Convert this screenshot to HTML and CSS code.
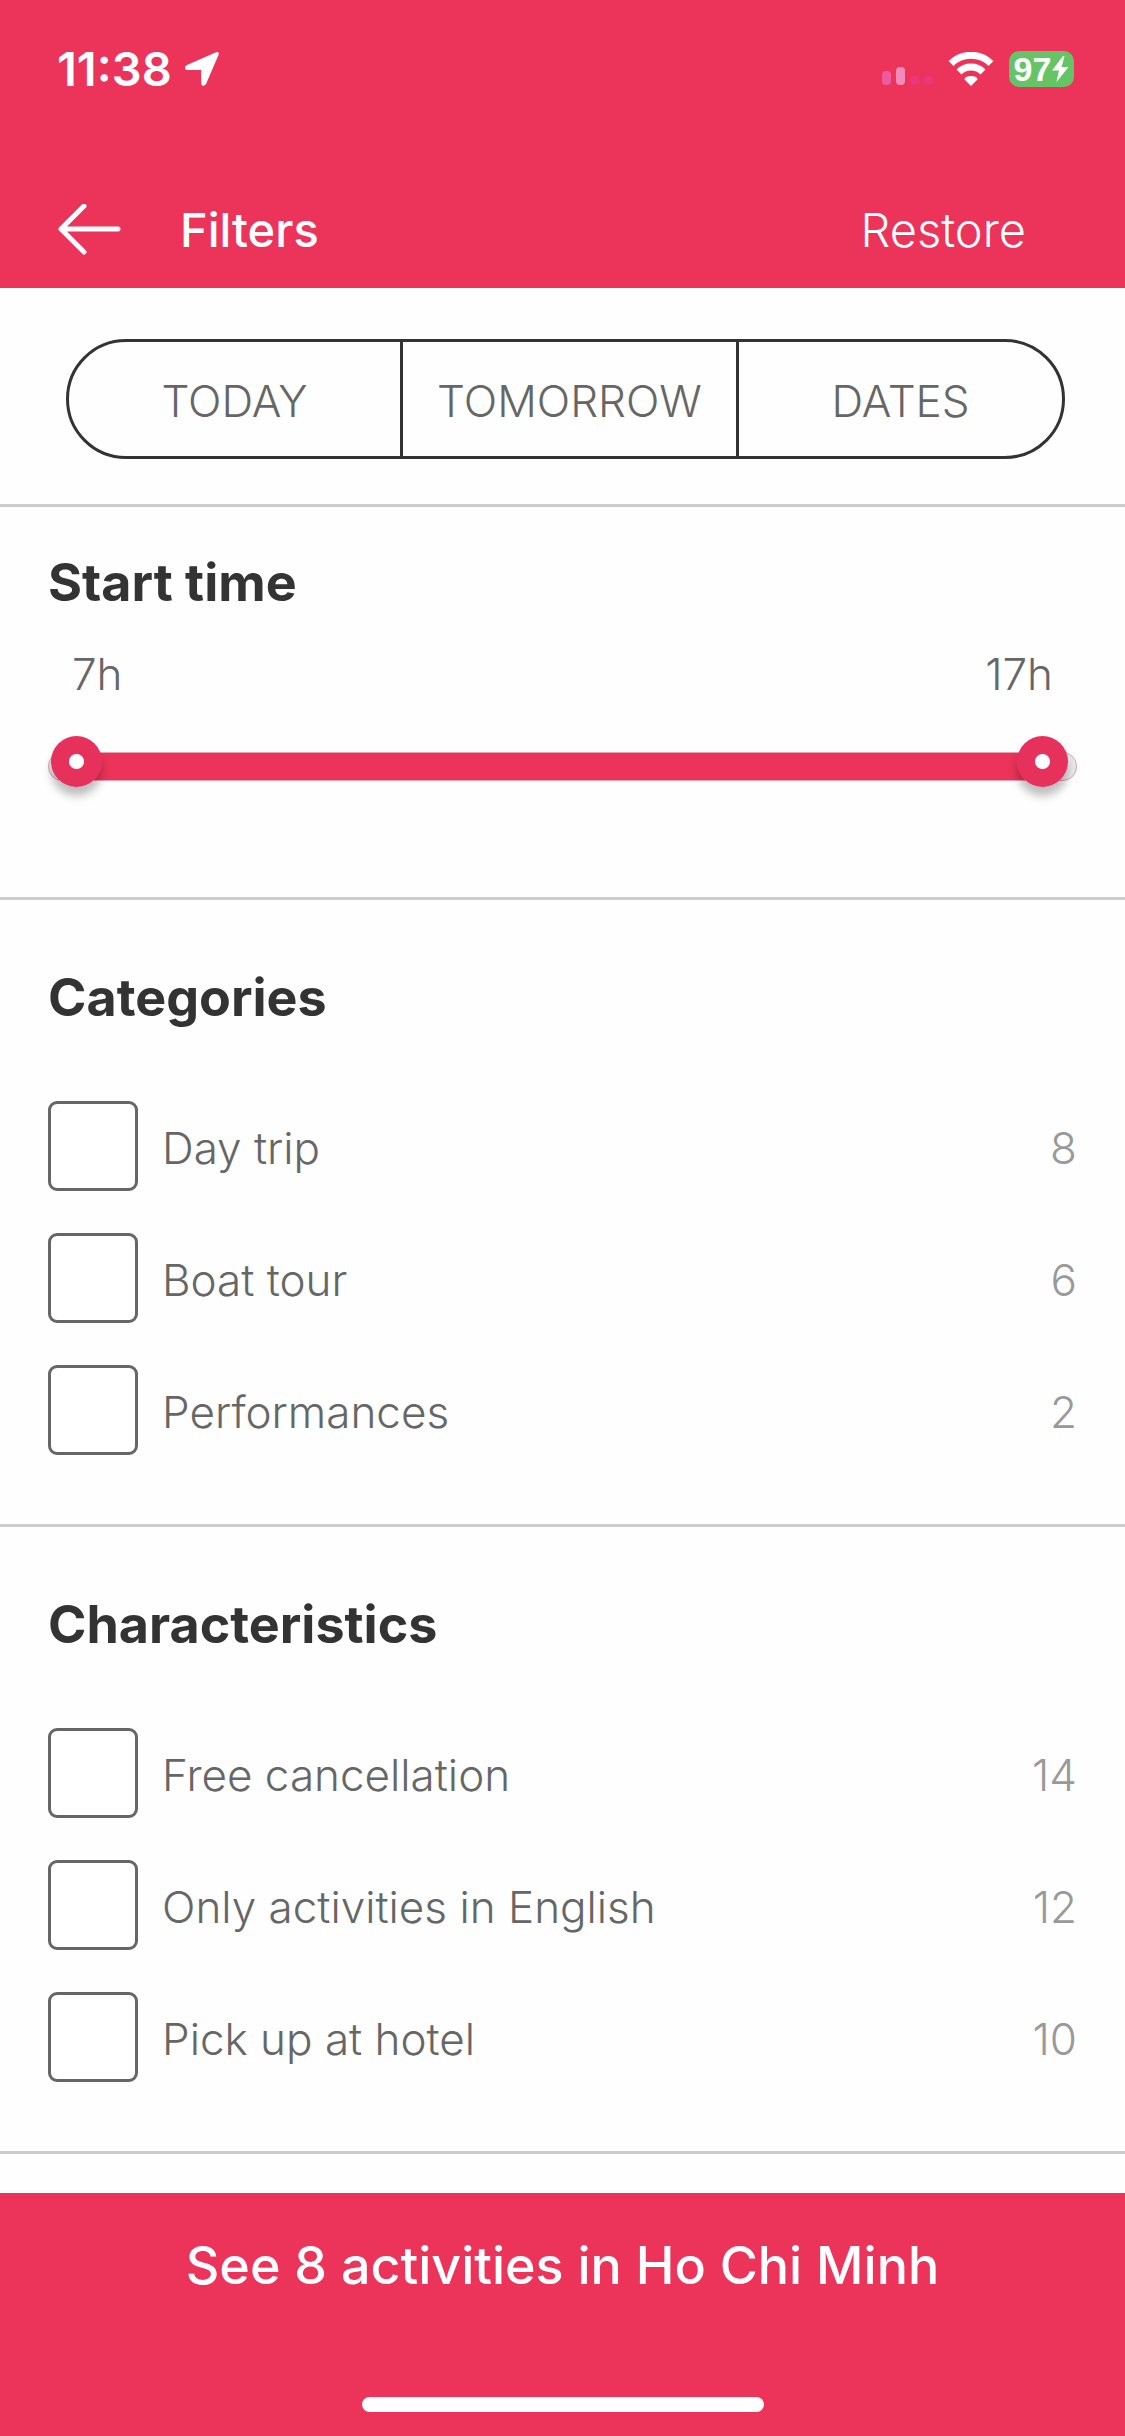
FILE: index.html
```html
<!DOCTYPE html>
<html lang="en">
<head>
  <meta charset="UTF-8" />
  <meta name="viewport" content="width=device-width, initial-scale=1.0"/>
  <title>Filters</title>
  <link rel="stylesheet" href="styles.css">
</head>
<body>
  <header>
    <div class="status-bar">
      <div class="status-time">
        <span>11:38</span>
        <svg width="36" height="36" viewBox="0 0 36 36" aria-hidden="true">
          <path d="M32 1.300Q35.500 0 34.500 4L22 33Q20.500 35.500 18.200 34.500Q17.200 34 17.200 32.500V19H3.500Q1 19 1 16.500Q1 14.800 3 14Z" fill="#fff"/>
        </svg>
      </div>
      <div class="status-icons">
        <svg width="51" height="20" viewBox="0 0 51 20" aria-hidden="true">
          <rect x="0" y="4" width="9" height="14" rx="4" fill="#ef5a9c"/>
          <rect x="14" y="0" width="9" height="18" rx="4" fill="#f28bb9"/>
          <rect x="28" y="9" width="9" height="9" rx="4" fill="#ec357c"/>
          <rect x="42" y="9" width="9" height="9" rx="4" fill="#ec357c"/>
        </svg>
        <svg width="46" height="34" viewBox="0 0 46 34" aria-hidden="true">
          <path d="M3 11.500A28.500 28.500 0 0 1 43 11.500" fill="none" stroke="#fff" stroke-width="7"/>
          <path d="M11 20A17 17 0 0 1 35 20" fill="none" stroke="#fff" stroke-width="7"/>
          <path d="M23 34L16.500 27.500Q16.500 24 23 24Q29.500 24 29.500 27.500Z" fill="#fff"/>
        </svg>
        <div class="battery">
          <span>97</span>
          <svg width="18" height="26" viewBox="0 0 18 26" aria-hidden="true">
            <path d="M12 0L1 14.500H8L5.500 26L17.500 11H10.500L13.500 0.500Z" fill="#fff"/>
          </svg>
        </div>
      </div>
    </div>

    <div class="nav-bar">
      <button class="back" aria-label="Back">
        <svg width="64" height="52" viewBox="0 0 64 52" aria-hidden="true">
          <path d="M26 2L3 25L26 48M3 25H60" fill="none" stroke="#fff" stroke-width="5" stroke-linecap="round" stroke-linejoin="round"/>
        </svg>
      </button>
      <h1>Filters</h1>
      <button class="restore">Restore</button>
    </div>
  </header>

  <main>
    <!-- Dates -->
    <section class="dates">
      <div class="segments">
        <button>TODAY</button>
        <button>TOMORROW</button>
        <button>DATES</button>
      </div>
    </section>

    <!-- Start time -->
    <section class="start-time">
      <h2>Start time</h2>
      <div class="hours">
        <label for="from">7h</label>
        <label for="to">17h</label>
      </div>
      <div class="slider">
        <input type="range" id="from" min="7" max="17" value="7" />
        <input type="range" id="to" min="7" max="17" value="17" />
      </div>
    </section>

    <section class="options">
      <h2>Categories</h2>
      <ul>
        <li><input type="checkbox" id="day-trip" /><label for="day-trip">Day trip</label><span>8</span></li>
        <li><input type="checkbox" id="boat-tour" /><label for="boat-tour">Boat tour</label><span>6</span></li>
        <li><input type="checkbox" id="performances" /><label for="performances">Performances</label><span>2</span></li>
      </ul>
    </section>

    <section class="options">
      <h2>Characteristics</h2>
      <ul>
        <li><input type="checkbox" id="free-cancellation" /><label for="free-cancellation">Free cancellation</label><span>14</span></li>
        <li><input type="checkbox" id="english" /><label for="english">Only activities in English</label><span>12</span></li>
        <li><input type="checkbox" id="pick-up" /><label for="pick-up">Pick up at hotel</label><span>10</span></li>
      </ul>
    </section>
  </main>

  <footer>
    <button class="see">See 8 activities in Ho Chi Minh</button>
    <div class="home-indicator"></div>
  </footer>
</body>
</html>
```
FILE: styles.css
```css
* { box-sizing: border-box; }

body {
  margin: 0;
  min-height: 100vh;
  display: flex;
  flex-direction: column;
  font-family: Inter, "Liberation Sans", sans-serif;
  font-size: 44px;
  font-weight: 300;
  line-height: 48px;
  color: #666;
  background: #fefefe;
}

button {
  padding: 0;
  border: none;
  background: none;
  font: inherit;
  color: inherit;
  cursor: pointer;
}

svg { display: block; }

header {
  background: #ec335a;
  color: #fff;
  padding-bottom: 32px;
}

.status-bar {
  display: flex;
  align-items: center;
  justify-content: space-between;
  height: 138px;
  padding: 0 51px 0 57px;
}

.status-time {
  display: flex;
  align-items: center;
  gap: 12px;
  font-size: 47px;
  font-weight: 600;
}

.status-icons {
  display: flex;
  align-items: center;
  gap: 15px;
}

.status-icons > svg:first-child {
  align-self: flex-end;
}

.battery {
  display: flex;
  align-items: center;
  justify-content: center;
  width: 65px;
  height: 36px;
  border-radius: 10px;
  background: #65c466;
  font-family: "Liberation Sans", sans-serif;
  font-size: 34px;
  font-weight: 700;
  line-height: 36px;
}

.nav-bar {
  display: flex;
  align-items: center;
  height: 118px;
  padding: 66px 99px 0 58px;
  font-size: 47px;
}

h1 {
  flex: 1;
  margin: 0 0 0 58px;
  font-size: 47px;
  font-weight: 500;
}

section {
  padding: 0 48px;
  border-bottom: 3px solid #ccc;
}

.dates {
  padding: 51px 60px 45px 66px;
}

.segments {
  display: grid;
  grid-template-columns: 331fr 336fr 326fr;
  height: 120px;
  border: 3px solid #333;
  border-radius: 60px;
}

.segments button {
  padding-top: 4px;
}

.segments button + button {
  border-left: 3px solid #333;
}

h2 {
  margin: 0;
  font-size: 52px;
  line-height: 60px;
  font-weight: 700;
  color: #333;
}

.start-time {
  padding-top: 46px;
  padding-bottom: 110px;
}

.hours {
  display: flex;
  justify-content: space-between;
  padding: 37px 24px 0;
}

/* Two range inputs share one bar */
.slider {
  position: relative;
  height: 51px;
  margin-top: 38px;
}

.slider::before {
  content: "";
  position: absolute;
  top: 16px;
  left: 0;
  right: 0;
  height: 27px;
  border: 1px solid #e3a3b2;
  border-radius: 14px;
  background: linear-gradient(#ec335a, #ec335a) center / calc(100% - 40px) 100% no-repeat #e8e8e8;
  background-origin: border-box;
}

.slider input {
  position: absolute;
  top: 0;
  left: 3px;
  width: calc(100% - 12px);
  height: 51px;
  margin: 0;
  background: none;
  appearance: none;
  pointer-events: none;
}

.slider input::-webkit-slider-thumb {
  appearance: none;
  width: 51px;
  height: 51px;
  border-radius: 50%;
  background: radial-gradient(circle, #fff 7px, #e5315b 8px);
  box-shadow: 0 9px 9px rgba(0,0,0,0.25);
  pointer-events: auto;
}

.options {
  padding-top: 68px;
  padding-bottom: 69px;
}

.options ul {
  display: flex;
  flex-direction: column;
  gap: 42px;
  margin: 73px 0 0;
  padding: 0;
  list-style: none;
}

.options li {
  display: flex;
  align-items: center;
}

.options label {
  flex: 1;
  padding: 4px 0 0 24px;
}

.options span {
  padding-top: 4px;
  color: #999;
}

.options input {
  appearance: none;
  width: 90px;
  height: 90px;
  margin: 0;
  border: 3px solid #666;
  border-radius: 9px;
  background: #fff;
}

footer {
  display: flex;
  flex-direction: column;
  align-items: center;
  margin-top: auto;
  padding-bottom: 24px;
  background: #ec335a;
  color: #fff;
}

.see {
  width: 100%;
  padding: 43px 0 101px;
  font-size: 52px;
  line-height: 60px;
  font-weight: 500;
}

.home-indicator {
  width: 402px;
  height: 15px;
  border-radius: 8px;
  background: #fff;
}
```
